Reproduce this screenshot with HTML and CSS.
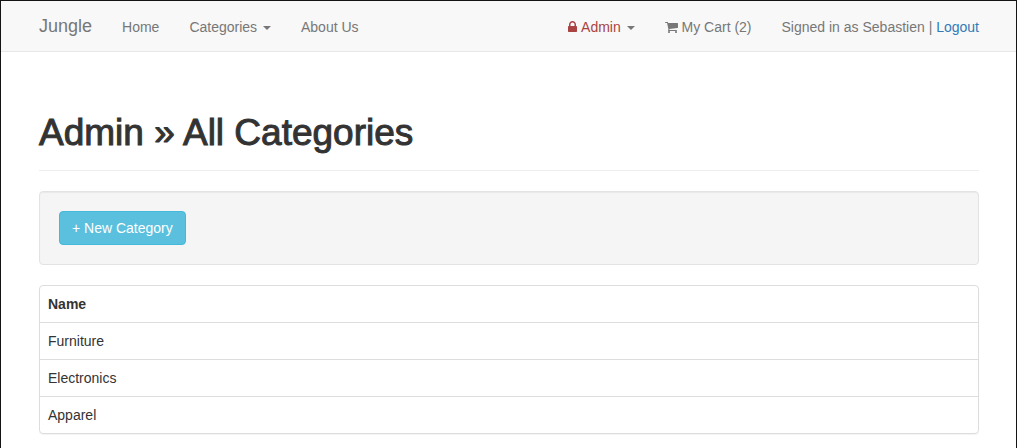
FILE: index.html
```html
<!DOCTYPE html>
<html lang="en">
<head>
<meta charset="utf-8">
<meta name="viewport" content="width=device-width, initial-scale=1">
<title>Jungle</title>
<link rel="stylesheet" href="styles.css">
</head>
<body>
<header class="navbar">
  <nav class="container navbar-inner" aria-label="Main">
    <a class="brand" href="#">Jungle</a>
    <ul class="nav">
      <li><a class="nav-link" href="#">Home</a></li>
      <li><button class="nav-link" type="button" aria-haspopup="true">Categories <span class="caret"></span></button></li>
      <li><a class="nav-link" href="#">About Us</a></li>
    </ul>
    <ul class="nav nav-right">
      <li><button class="nav-link admin" type="button" aria-haspopup="true"><svg class="icon-lock" viewBox="0 0 1152 1536" aria-hidden="true"><path fill-rule="evenodd" d="M320 640h512V448q0-106-75-181t-181-75-181 75-75 181v192zm832 96v576q0 40-28 68t-68 28H96q-40 0-68-28t-28-68V736q0-40 28-68t68-28h32V448q0-184 132-316T576 0t316 132 132 316v192h32q40 0 68 28t28 68z"/></svg> Admin <span class="caret"></span></button></li>
      <li><a class="nav-link" href="#"><svg class="icon-cart" viewBox="0 0 1664 1536" aria-hidden="true"><path d="M640 1408q0 52-38 90t-90 38-90-38-38-90 38-90 90-38 90 38 38 90zm896 0q0 52-38 90t-90 38-90-38-38-90 38-90 90-38 90 38 38 90zm128-1088v512q0 24-16 42t-41 21L563 1017q13 60 13 70 0 16-24 64h920q26 0 45 19t19 45-19 45-45 19H448q-26 0-45-19t-19-45q0-11 8-31t16-36 21-40 15-30L267 256H64q-26 0-45-19T0 192t19-45 45-19h256q16 0 28 6t20 16 13 24 8 26 5 29 5 27h1201q26 0 45 19t19 45z"/></svg> My Cart (2)</a></li>
      <li class="session">Signed in as Sebastien | <a href="#">Logout</a></li>
    </ul>
  </nav>
</header>
<main class="container">
  <h1 class="page-header">Admin » All Categories</h1>
  <div class="well">
    <a class="btn-new" href="#">+ New Category</a>
  </div>
  <div class="panel">
    <table class="table">
      <thead><tr><th scope="col">Name</th></tr></thead>
      <tbody>
        <tr><td>Furniture</td></tr>
        <tr><td>Electronics</td></tr>
        <tr><td>Apparel</td></tr>
      </tbody>
    </table>
  </div>
</main>
</body>
</html>
```

FILE: styles.css
```css
* { box-sizing: border-box; }
html { background: #fff; }
body {
  min-height: 100vh;
  margin: 0;
  border: 1px solid #141414;
  border-bottom: 0;
  font: 14px/20px "Liberation Sans", Arial, sans-serif;
  color: #333;
}
.container { padding: 0 37px 0 38px; }
.navbar { background: #f8f8f8; border-bottom: 1px solid #e7e7e7; }
.navbar-inner { display: flex; align-items: baseline; color: #777; }
.brand { margin-right: 15px; font-size: 18px; color: #777; text-decoration: none; }
.nav { display: flex; margin: 0; padding: 0; list-style: none; white-space: nowrap; }
.nav-right { margin-left: auto; }
.nav-link {
  display: block;
  padding: 16px 15px 14px;
  border: 0;
  background: none;
  font: inherit;
  color: #777;
  text-decoration: none;
  cursor: pointer;
}
.admin { color: #a94442; }
.caret {
  display: inline-block;
  margin-left: 2px;
  border-top: 4px solid #777;
  border-left: 4px solid transparent;
  border-right: 4px solid transparent;
  vertical-align: middle;
}
.icon-lock { width: 9px; height: 12px; margin-right: 1px; fill: currentColor; vertical-align: -1px; }
.icon-cart { width: 13px; height: 12px; fill: currentColor; vertical-align: -1px; }
.session { padding: 16px 0 14px 15px; }
.session a { color: #337ab7; text-decoration: none; }
.page-header {
  margin: 61px 0 20px;
  padding-bottom: 17px;
  border-bottom: 1px solid #eee;
  font-size: 37px;
  line-height: 40px;
  font-weight: 500;
  -webkit-text-stroke: 1px #333;
}
.well {
  margin-bottom: 20px;
  padding: 19px;
  border: 1px solid #e3e3e3;
  border-radius: 4px;
  background: #f5f5f5;
  box-shadow: inset 0 1px 1px rgba(0, 0, 0, .05);
}
.btn-new {
  display: inline-block;
  padding: 6px 12px;
  border: 1px solid #46b8da;
  border-radius: 4px;
  background: #5bc0de;
  color: #fff;
  text-decoration: none;
  vertical-align: top;
}
.panel { border: 1px solid #ddd; border-radius: 4px; box-shadow: 0 1px 1px rgba(0, 0, 0, .05); }
.table { width: 100%; border-collapse: collapse; }
.table th, .table td { padding: 8px; text-align: left; }
.table td { border-top: 1px solid #ddd; }
```
